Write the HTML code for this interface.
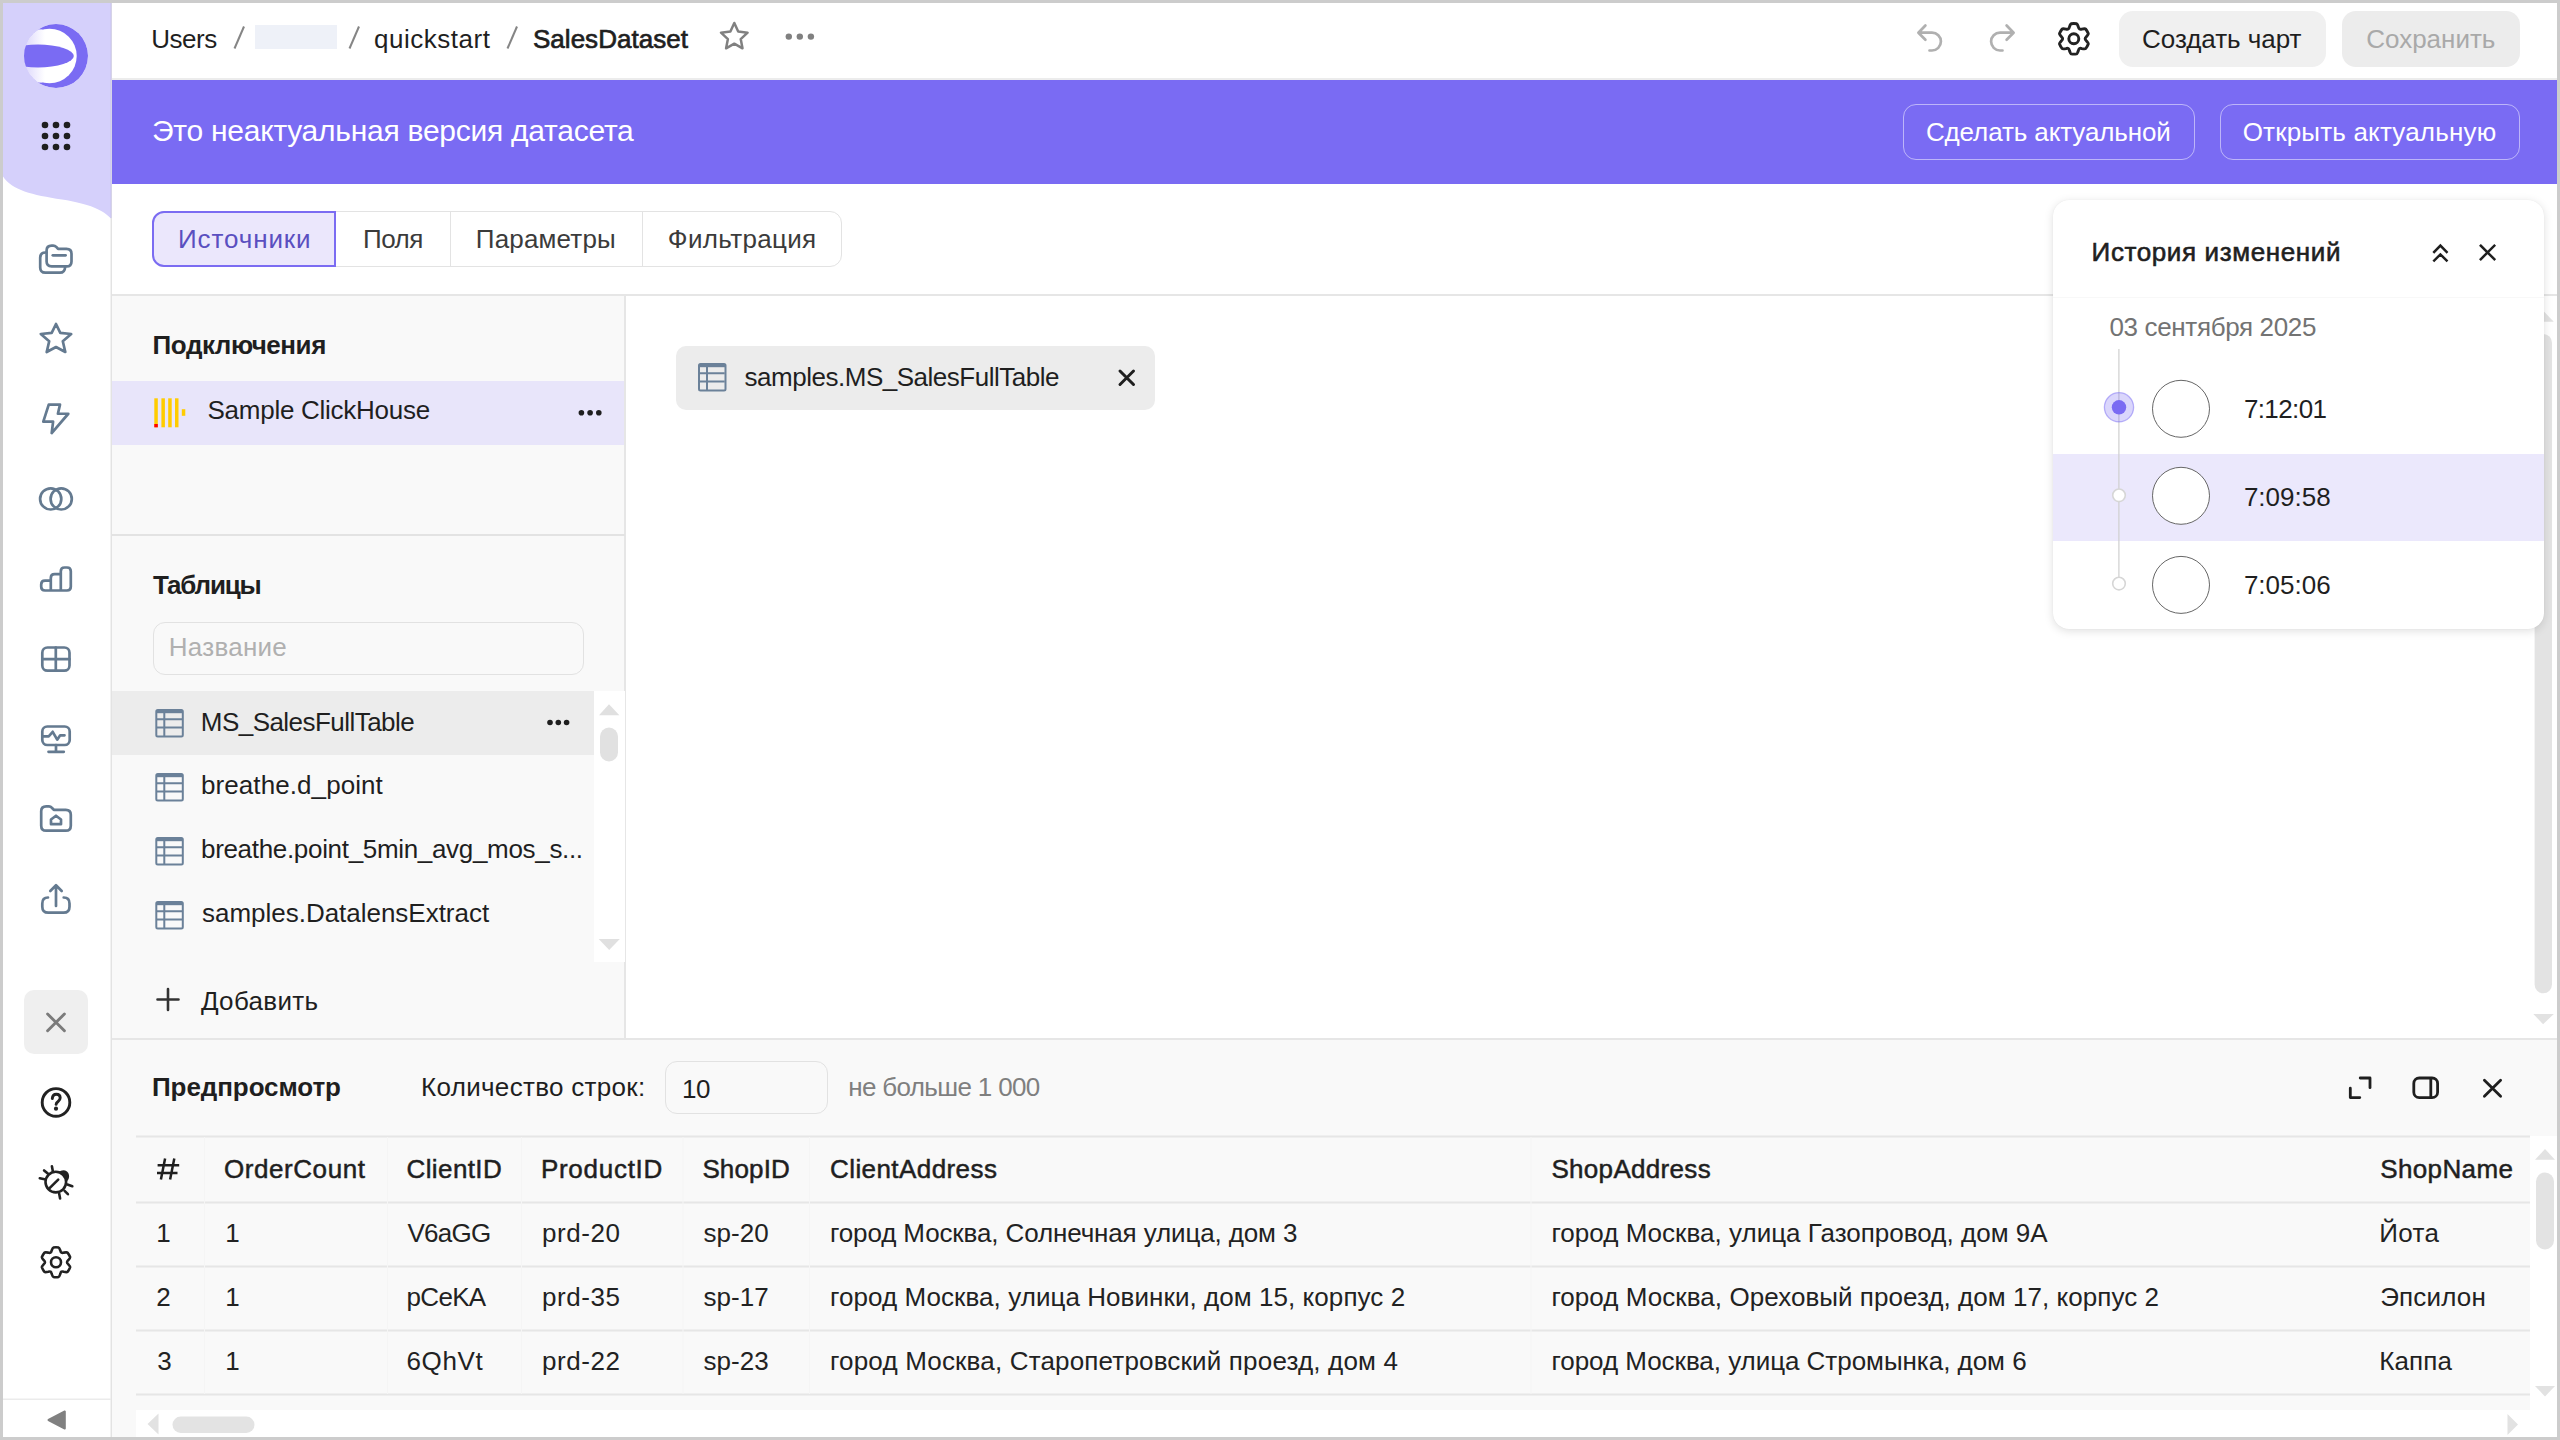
<!DOCTYPE html>
<html><head><meta charset="utf-8">
<style>
*{box-sizing:border-box;margin:0;padding:0}
html,body{width:2560px;height:1440px;overflow:hidden;background:#cccccc;font-family:"Liberation Sans",sans-serif;color:#1f1f1f}
.a{position:absolute}
#app{position:absolute;left:3px;top:3px;width:2554px;height:1434px;background:#fff;overflow:hidden}
#pg{position:absolute;left:-3px;top:-3px;width:2560px;height:1440px}
.t{position:absolute;white-space:nowrap;line-height:1;font-family:"Liberation Sans",sans-serif}
svg{position:absolute;left:0;top:0;overflow:visible}
.ic{fill:none;stroke:#647a90;stroke-width:2.7;stroke-linecap:round;stroke-linejoin:round}
.dk{fill:none;stroke:#222;stroke-width:2.6;stroke-linecap:round;stroke-linejoin:round}
</style></head><body>
<div id="app"><div id="pg">

<!-- ============ SIDEBAR ============ -->
<div class="a" style="left:0;top:0;width:112px;height:1440px;background:#fff;border-right:1px solid #e3e3e3"></div><div class="a" style="left:110px;top:0;width:1px;height:1440px;background:#f2f2f2"></div>
<svg width="2560" height="1440">
  <path d="M0 0 H111 V218.5 C103 210 90 204 62 199.5 C32 195 12 190 3 176.5 L0 176 Z" fill="#d5d0fb"/>
  <rect x="110.5" y="0" width="1" height="218" fill="#c9c4ec"/>
  <!-- logo -->
  <defs>
    <clipPath id="lc"><circle cx="56" cy="56" r="32"/></clipPath>
    <linearGradient id="lg" gradientUnits="userSpaceOnUse" x1="24" y1="0" x2="62" y2="0">
      <stop offset="0" stop-color="#dcd7fb"/><stop offset="0.55" stop-color="#ffffff"/>
    </linearGradient>
  </defs>
  <g clip-path="url(#lc)">
    <circle cx="56" cy="56" r="32" fill="#7a6bf3"/>
    <circle cx="49.5" cy="56" r="27.2" fill="url(#lg)"/><rect x="22" y="29.4" width="20.5" height="53.2" fill="url(#lg)"/>
    <ellipse cx="38" cy="56" rx="35.8" ry="11.4" fill="#7a6bf3"/>
  </g>
  <!-- grid dots -->
  <g fill="#1f1f1f">
    <circle cx="45" cy="125" r="3.3"/><circle cx="56" cy="125" r="3.3"/><circle cx="67" cy="125" r="3.3"/>
    <circle cx="45" cy="136" r="3.3"/><circle cx="56" cy="136" r="3.3"/><circle cx="67" cy="136" r="3.3"/>
    <circle cx="45" cy="147" r="3.3"/><circle cx="56" cy="147" r="3.3"/><circle cx="67" cy="147" r="3.3"/>
  </g>
  <!-- collections -->
  <g class="ic">
    <path d="M46.6 252.5 H45.4 Q40.2 252.5 40.2 257.7 V267.5 Q40.2 272.7 45.4 272.7 H60 Q64.8 272.7 65.2 266.6"/>
    <path d="M46.6 261.6 V250.6 Q46.6 245.6 51.6 245.6 H53.2 Q55 245.6 56.2 246.9 L58 248.8 H66.5 Q71.5 248.8 71.5 253.8 V261.4 Q71.5 266.4 66.5 266.4 H51.6 Q46.6 266.4 46.6 261.6 Z"/>
    <path d="M52.8 255.3 H65.6"/>
  </g>
  <!-- star -->
  <path class="ic" d="M56 324 L60.3 332.8 L71.2 334 L62.8 341.2 L65.3 352 L56 347 L46.7 352 L49.2 341.2 L40.8 334 L51.7 332.8Z"/>
  <!-- lightning -->
  <path class="ic" d="M48.75 404.6 H60 L57.9 413.75 H68.3 L51.7 433.1 L53.1 421.7 H43.3 Z"/>
  <!-- two circles -->
  <g class="ic"><circle cx="50.7" cy="498.9" r="10.6"/><circle cx="61.2" cy="498.9" r="10.6"/></g>
  <!-- bar chart -->
  <g class="ic">
    <path d="M41.2 584.5 Q41.2 580.7 45 580.7 H50.8 V578 Q50.8 574.2 54.6 574.2 H60.8 V571.3 Q60.8 567.5 64.6 567.5 H67 Q70.8 567.5 70.8 571.3 V586.7 Q70.8 590.5 67 590.5 H45 Q41.2 590.5 41.2 586.7 Z M50.8 580.7 V590.5 M60.8 574.2 V590.5"/>
  </g>
  <!-- table -->
  <g class="ic">
    <rect x="42.3" y="647.5" width="27.2" height="23.2" rx="5.2"/>
    <path d="M55.8 647.5 V670.7 M42.3 659.2 H69.5"/>
  </g>
  <!-- monitor -->
  <g class="ic">
    <rect x="42.3" y="726.5" width="27.4" height="18.5" rx="5"/>
    <path d="M42.8 736.3 H48.7 L52.7 731.8 L57.2 739.7 L60.2 735.3 H64.5"/>
    <path d="M56 745 V751.8 M48.5 751.8 H63.8"/>
  </g>
  <!-- folder home -->
  <g class="ic">
    <path d="M41.2 825.7 V811.3 Q41.2 806.3 46.2 806.3 H49 Q50.6 806.3 51.8 807.7 L53.8 809.8 H65.8 Q70.8 809.8 70.8 814.8 V825.7 Q70.8 830.7 65.8 830.7 H46.2 Q41.2 830.7 41.2 825.7 Z"/>
    <path d="M51 824.2 V819.5 L56 815.7 L61 819.5 V824.2 Z"/>
  </g>
  <!-- upload -->
  <g class="ic">
    <path d="M56 885.5 V906 M50.3 891 L56 885.3 L61.7 891"/>
    <path d="M48 897.5 Q42.3 897.5 42.3 903.5 V906.7 Q42.3 912.7 48.3 912.7 H63.5 Q69.5 912.7 69.5 906.7 V903.5 Q69.5 897.5 63.7 897.5"/>
  </g>
  <!-- bottom -->
  <rect x="24" y="990" width="64" height="64" rx="10" fill="#efefef"/>
  <path d="M47.6 1014 L64.4 1030.8 M64.4 1014 L47.6 1030.8" stroke="#7b7b7b" stroke-width="2.9" stroke-linecap="round"/>
  <g class="dk" style="stroke-width:2.9">
    <circle cx="56" cy="1102.4" r="13.8"/>
    <path d="M52.3 1098.6 Q52.6 1094.2 56.3 1094.2 Q60.1 1094.2 60.2 1097.8 Q60.2 1100 58.1 1101.5 Q56.1 1102.9 56.1 1104.4"/>
  </g>
  <circle cx="56" cy="1108.7" r="2.1" fill="#222"/>
  <!-- bug -->
  <g class="dk">
    <circle cx="55.8" cy="1182.1" r="10.3"/>
    <path d="M49.6 1188.2 L58.2 1179.6"/>
    <path d="M51.9 1166.2 L52.8 1170.9 M44.1 1170.4 L47.8 1173.6 M39.8 1178.2 L44.6 1179.2 M67.4 1184.5 L72.3 1186.2 M64.6 1190.8 L67.9 1194.2 M59.2 1193.8 L60.1 1198.5"/>
  </g>
  <path d="M58.5 1172.2 Q63 1168.5 67 1171.5 Q70.2 1174.5 68.6 1179 L66.6 1182 Q64.5 1175 58.5 1172.2 Z" fill="#222"/>
  <!-- gear -->
  <path class="dk" d="M51.59 1250.72 Q52.63 1247.58 53.40 1247.43 A15.0 15.0 0 0 1 58.60 1247.43 Q59.37 1247.58 60.41 1250.72 Q60.95 1253.63 63.74 1252.64 Q66.97 1251.97 67.49 1252.56 A15.0 15.0 0 0 1 70.10 1257.07 Q70.34 1257.81 68.15 1260.28 Q65.90 1262.20 68.15 1264.12 Q70.34 1266.59 70.10 1267.33 A15.0 15.0 0 0 1 67.49 1271.84 Q66.97 1272.43 63.74 1271.76 Q60.95 1270.77 60.41 1273.68 Q59.37 1276.82 58.60 1276.97 A15.0 15.0 0 0 1 53.40 1276.97 Q52.63 1276.82 51.59 1273.68 Q51.05 1270.77 48.26 1271.76 Q45.03 1272.43 44.51 1271.84 A15.0 15.0 0 0 1 41.90 1267.33 Q41.66 1266.59 43.85 1264.12 Q46.10 1262.20 43.85 1260.28 Q41.66 1257.81 41.90 1257.07 A15.0 15.0 0 0 1 44.51 1252.56 Q45.03 1251.97 48.26 1252.64 Q51.05 1253.63 51.59 1250.72 Z"/><circle class="dk" cx="56" cy="1262.2" r="5"/>
  <rect x="3" y="1398.5" width="108" height="1.5" fill="#ebebeb"/>
  <path d="M64.8 1411.5 V1428.5 L48.5 1420 Z" fill="#808080" stroke="#808080" stroke-width="2" stroke-linejoin="round"/>
</svg>

<!-- ============ HEADER ============ -->
<div class="a" style="left:112px;top:78px;width:2448px;height:2px;background:#ececec"></div>
<div class="a" style="left:255px;top:25px;width:82px;height:24px;background:#eef1f8"></div>
<svg width="2560" height="1440">
  <g stroke="#858585" stroke-width="2" stroke-linecap="butt">
    <path d="M244 26.5 L234.5 48.5"/><path d="M359 26.5 L349.5 48.5"/><path d="M517 26.5 L507.5 48.5"/>
  </g>
  <path d="M734.3 23.0 L738.2 31.6 L747.6 32.7 L740.7 39.1 L742.5 48.3 L734.3 43.7 L726.1 48.3 L727.9 39.1 L721.0 32.7 L730.4 31.6Z" fill="none" stroke="#808080" stroke-width="2.5" stroke-linejoin="round"/>
  <g fill="#808080"><circle cx="788.8" cy="36.6" r="3.2"/><circle cx="799.8" cy="36.6" r="3.2"/><circle cx="810.9" cy="36.6" r="3.2"/></g>
  <!-- undo / redo -->
  <g fill="none" stroke="#b0b0b0" stroke-width="2.7" stroke-linecap="round" stroke-linejoin="round">
    <path d="M1925.4 25.5 L1918.4 32.7 L1925.4 39.7 M1918.6 32.7 H1932 A8.9 8.9 0 0 1 1932 50.5 H1929.5"/>
    <path d="M2006.6 25.5 L2013.6 32.7 L2006.6 39.7 M2013.4 32.7 H2000 A8.9 8.9 0 0 0 2000 50.5 H2002.5"/>
  </g>
  <path d="M2069.40 27.09 Q2070.46 23.89 2071.24 23.73 A15.3 15.3 0 0 1 2076.56 23.73 Q2077.34 23.89 2078.40 27.09 Q2078.95 30.05 2081.80 29.05 Q2085.09 28.37 2085.62 28.97 A15.3 15.3 0 0 1 2088.28 33.57 Q2088.53 34.33 2086.29 36.84 Q2084.00 38.80 2086.29 40.76 Q2088.53 43.27 2088.28 44.03 A15.3 15.3 0 0 1 2085.62 48.63 Q2085.09 49.23 2081.80 48.55 Q2078.95 47.55 2078.40 50.51 Q2077.34 53.71 2076.56 53.87 A15.3 15.3 0 0 1 2071.24 53.87 Q2070.46 53.71 2069.40 50.51 Q2068.85 47.55 2066.00 48.55 Q2062.71 49.23 2062.18 48.63 A15.3 15.3 0 0 1 2059.52 44.03 Q2059.27 43.27 2061.51 40.76 Q2063.80 38.80 2061.51 36.84 Q2059.27 34.33 2059.52 33.57 A15.3 15.3 0 0 1 2062.18 28.97 Q2062.71 28.37 2066.00 29.05 Q2068.85 30.05 2069.40 27.09 Z" fill="none" stroke="#222" stroke-width="2.9" stroke-linejoin="round"/>
  <circle cx="2073.8" cy="38.8" r="5" fill="none" stroke="#222" stroke-width="2.9"/>
</svg>
<div class="a" style="left:2118.5px;top:11px;width:207.5px;height:56px;border-radius:14px;background:#f0f0f0"></div>
<div class="a" style="left:2342px;top:11px;width:178px;height:56px;border-radius:14px;background:#ececec"></div>

<!-- ============ BANNER ============ -->
<div class="a" style="left:112px;top:80px;width:2448px;height:104px;background:#7a6bf3"></div>
<div class="a" style="left:1902.5px;top:104px;width:292px;height:56px;border-radius:13px;border:1.5px solid rgba(255,255,255,0.5)"></div>
<div class="a" style="left:2219.5px;top:104px;width:300px;height:56px;border-radius:13px;border:1.5px solid rgba(255,255,255,0.5)"></div>

<!-- ============ TABS ============ -->
<div class="a" style="left:152px;top:211px;width:690px;height:56px;border-radius:12px;border:1.5px solid #e3e3e3"></div>
<div class="a" style="left:449.7px;top:212px;width:1.5px;height:54px;background:#e3e3e3"></div>
<div class="a" style="left:641.7px;top:212px;width:1.5px;height:54px;background:#e3e3e3"></div>
<div class="a" style="left:152px;top:211px;width:184px;height:56px;border-radius:12px 0 0 12px;border:2px solid #7b6cf2;background:#ebe7fc"></div>

<!-- horizontal separator -->
<div class="a" style="left:112px;top:294px;width:2448px;height:2px;background:#e6e6e6"></div>

<!-- ============ LEFT PANEL ============ -->
<div class="a" style="left:112px;top:296px;width:513px;height:743px;background:#f9f9f9"></div>
<div class="a" style="left:624px;top:296px;width:2px;height:743px;background:#e6e6e6"></div>
<div class="a" style="left:112px;top:381px;width:512px;height:64px;background:#e8e5fa"></div>
<svg width="2560" height="1440">
  <g fill="#ffcc00">
    <rect x="154.3" y="398.3" width="3.5" height="29"/><rect x="161.4" y="398.3" width="3.5" height="29"/>
    <rect x="168.2" y="398.3" width="3.5" height="29"/><rect x="175.0" y="398.3" width="3.5" height="29"/>
    <rect x="181.8" y="409.2" width="3.5" height="6.6"/>
  </g>
  <rect x="154.3" y="424" width="3.5" height="3.3" fill="#ff0000"/>
  <g fill="#1f1f1f"><circle cx="581.4" cy="412.7" r="2.8"/><circle cx="590.1" cy="412.7" r="2.8"/><circle cx="598.8" cy="412.7" r="2.8"/></g>
</svg>
<div class="a" style="left:112px;top:534px;width:513px;height:2px;background:#e3e3e3"></div>
<div class="a" style="left:152.5px;top:621.5px;width:431px;height:53px;border-radius:12px;border:1.5px solid #e2e2e2"></div>
<div class="a" style="left:112px;top:691px;width:481.5px;height:63.5px;background:#ececec"></div>
<div class="a" style="left:593.5px;top:691px;width:31px;height:271px;background:#ffffff"></div>
<svg width="2560" height="1440">
  <path d="M599 715.3 L609 704.3 L619.4 715.3 Z" fill="#e0e0e0"/>
  <path d="M598.7 939 L609.2 950 L619.8 939 Z" fill="#e0e0e0"/>
  <rect x="600" y="727.5" width="18" height="34" rx="9" fill="#e1e1e1"/>
  <g fill="#1f1f1f"><circle cx="550" cy="722.5" r="2.8"/><circle cx="558.3" cy="722.5" r="2.8"/><circle cx="566.6" cy="722.5" r="2.8"/></g>
  <g id="tbl" fill="none" stroke="#6b8199" stroke-width="2">
    <rect x="156.3" y="710" width="26.5" height="26.5" rx="1.5"/>
    <path d="M156.3 711.6 H182.8" stroke-width="3.2"/>
    <path d="M157 719.3 H182 M157 727.6 H182 M164.3 711 V736"/>
  </g>
  <use href="#tbl" x="0" y="64"/><use href="#tbl" x="0" y="128"/><use href="#tbl" x="0" y="192"/>
  <path d="M168 989 V1010 M157.5 999.5 H178.5" stroke="#333" stroke-width="2.6" stroke-linecap="round"/>
</svg>

<!-- ============ SOURCE CANVAS ============ -->
<div class="a" style="left:676px;top:346px;width:479px;height:63.5px;border-radius:10px;background:#ececec"></div>
<svg width="2560" height="1440">
  <use href="#tbl" x="542.7" y="-346"/>
  <path d="M1120 371 L1133.5 384.5 M1133.5 371 L1120 384.5" stroke="#1f1f1f" stroke-width="3" stroke-linecap="round"/>
  <path d="M2533.2 321.8 L2543.2 310.8 L2553.8 321.8 Z" fill="#e2e2e2"/>
  <path d="M2533.3 1014 L2543.1 1024.2 L2553.8 1014 Z" fill="#e2e2e2"/>
  <rect x="2534.6" y="334" width="17.4" height="659.3" rx="8.7" fill="#e3e3e3"/>
</svg>

<!-- ============ HISTORY PANEL ============ -->
<div class="a" style="left:2053px;top:200px;width:491px;height:428.5px;border-radius:16px;background:#fff;box-shadow:0 2px 10px rgba(0,0,0,0.13),0 0 1px rgba(0,0,0,0.08);overflow:hidden">
  <div class="a" style="left:0;top:253.5px;width:491px;height:87px;background:#ebe8fc"></div>
  <div class="a" style="left:0;top:97px;width:491px;height:1px;background:#f8f8f8"></div>
</div>
<svg width="2560" height="1440">
  <path d="M2434.2 251.9 L2440.4 245.6 L2446.6 251.9 M2434.2 260.6 L2440.4 254.4 L2446.6 260.6" fill="none" stroke="#1f1f1f" stroke-width="2.5" stroke-linecap="square" stroke-linejoin="miter"/>
  <path d="M2480.8 245.7 L2494.3 259.2 M2494.3 245.7 L2480.8 259.2" stroke="#1f1f1f" stroke-width="2.5" stroke-linecap="square"/>
  <rect x="2118.3" y="349" width="1.2" height="234" fill="#cfcfcf"/>
  <circle cx="2119" cy="407.3" r="14.6" fill="rgba(122,107,243,0.28)" stroke="rgba(122,107,243,0.5)" stroke-width="1.3"/>
  <circle cx="2119" cy="407.3" r="7.2" fill="#7a6bf3"/>
  <circle cx="2119" cy="495.3" r="6.3" fill="#fff" stroke="#d6d6d6" stroke-width="1.6"/>
  <circle cx="2119" cy="583.6" r="6.3" fill="#fff" stroke="#d6d6d6" stroke-width="1.6"/>
  <g fill="#fff" stroke="#666" stroke-width="1">
    <circle cx="2181" cy="408.8" r="28.5"/><circle cx="2181" cy="495.8" r="28.5"/><circle cx="2181" cy="584.9" r="28.5"/>
  </g>
</svg>

<!-- ============ PREVIEW ============ -->
<div class="a" style="left:112px;top:1038px;width:2448px;height:2px;background:#e6e6e6"></div>
<div class="a" style="left:112px;top:1040px;width:2448px;height:400px;background:#f9f9f9"></div>
<div class="a" style="left:664.5px;top:1061px;width:163px;height:53px;border-radius:12px;border:1.5px solid #e2e2e2"></div>
<svg width="2560" height="1440">
  <g fill="none" stroke="#1f1f1f" stroke-width="2.8" stroke-linecap="round" stroke-linejoin="round">
    <path d="M2350.3 1088.2 V1097.6 H2359.8 M2370 1087.7 V1078 H2360.2"/>
    <rect x="2413.8" y="1078" width="23.8" height="19.7" rx="5.5"/>
    <path d="M2430.8 1078.5 V1097.2"/>
  </g>
  <path d="M2484.4 1080.2 L2500.6 1096.2 M2500.6 1080.2 L2484.4 1096.2" stroke="#1f1f1f" stroke-width="2.8" stroke-linecap="round"/>
  <!-- table lines -->
  <g fill="#e6e6e6">
    <rect x="136" y="1135.5" width="2394" height="2"/>
    <rect x="136" y="1201.5" width="2394" height="2"/>
    <rect x="136" y="1265.5" width="2394" height="2"/>
    <rect x="136" y="1329.5" width="2394" height="2"/>
    <rect x="136" y="1393.5" width="2394" height="2"/>
  </g>
  <path d="M165.1 1158.5 L160.9 1179.5 M174.3 1158.5 L170.1 1179.5 M157.6 1165.3 H179.2 M157 1172.9 H177.5" stroke="#1f1f1f" stroke-width="2.5"/>
  <g fill="#f5f5f5">
    <rect x="204" y="1137" width="1" height="257"/><rect x="387" y="1137" width="1" height="257"/>
    <rect x="521" y="1137" width="1" height="257"/><rect x="682.5" y="1137" width="1" height="257"/>
    <rect x="809" y="1137" width="1" height="257"/><rect x="1530.5" y="1137" width="1" height="257"/>
    
  </g>
  <rect x="2530" y="1136" width="27" height="301" fill="#fff"/>
  <rect x="136" y="1410" width="2421" height="27" fill="#fff"/>
  <path d="M2535 1159.8 L2545 1149 L2555 1159.8 Z" fill="#e2e2e2"/>
  <path d="M2535 1386 L2545 1396.5 L2555 1386 Z" fill="#e2e2e2"/>
  <rect x="2536" y="1172.5" width="18" height="77" rx="9" fill="#e3e3e3"/>
  <path d="M158.5 1413.5 L147.5 1424 L158.5 1434.5 Z" fill="#e2e2e2"/>
  <path d="M2507.5 1414 L2518 1424.5 L2507.5 1435 Z" fill="#e2e2e2"/>
  <rect x="172.5" y="1416.5" width="82" height="16.5" rx="8.25" fill="#e3e3e3"/>
</svg>


<div class="t" style="left:151.2px;top:25.8px;font-size:26px;color:#1f1f1f;letter-spacing:-0.47px;">Users</div>
<div class="t" style="left:374.0px;top:25.8px;font-size:26px;color:#1f1f1f;letter-spacing:0.51px;">quickstart</div>
<div class="t" style="left:533.0px;top:25.8px;font-size:26px;color:#1f1f1f;letter-spacing:0.02px;-webkit-text-stroke:0.7px #1f1f1f;">SalesDataset</div>
<div class="t" style="left:2142.0px;top:26.2px;font-size:26px;color:#1f1f1f;letter-spacing:-0.03px;">Создать чарт</div>
<div class="t" style="left:2366.2px;top:26.2px;font-size:26px;color:#a9a9a9;">Сохранить</div>
<div class="t" style="left:152.0px;top:116.2px;font-size:30px;color:#ffffff;letter-spacing:-0.25px;">Это неактуальная версия датасета</div>
<div class="t" style="left:1925.9px;top:119.0px;font-size:26px;color:#ffffff;letter-spacing:-0.11px;">Сделать актуальной</div>
<div class="t" style="left:2242.7px;top:119.0px;font-size:26px;color:#ffffff;letter-spacing:0.18px;">Открыть актуальную</div>
<div class="t" style="left:178.0px;top:225.8px;font-size:26px;color:#5a4fc0;letter-spacing:0.89px;">Источники</div>
<div class="t" style="left:363.0px;top:225.8px;font-size:26px;color:#3b3b3b;letter-spacing:-0.52px;">Поля</div>
<div class="t" style="left:475.8px;top:225.8px;font-size:26px;color:#3b3b3b;letter-spacing:0.17px;">Параметры</div>
<div class="t" style="left:667.8px;top:225.8px;font-size:26px;color:#3b3b3b;letter-spacing:0.34px;">Фильтрация</div>
<div class="t" style="left:152.6px;top:332.1px;font-size:26px;color:#1f1f1f;font-weight:700;letter-spacing:-0.45px;">Подключения</div>
<div class="t" style="left:207.5px;top:397.0px;font-size:26px;color:#1f1f1f;letter-spacing:-0.26px;">Sample ClickHouse</div>
<div class="t" style="left:153.0px;top:572.0px;font-size:26px;color:#1f1f1f;font-weight:700;letter-spacing:-1.18px;">Таблицы</div>
<div class="t" style="left:168.8px;top:633.9px;font-size:26px;color:#b0b0b0;letter-spacing:0.25px;">Название</div>
<div class="t" style="left:200.8px;top:708.8px;font-size:26px;color:#1f1f1f;letter-spacing:-0.54px;">MS_SalesFullTable</div>
<div class="t" style="left:201.0px;top:772.4px;font-size:26px;color:#1f1f1f;letter-spacing:0.08px;">breathe.d_point</div>
<div class="t" style="left:201.0px;top:836.4px;font-size:26px;color:#1f1f1f;letter-spacing:-0.32px;">breathe.point_5min_avg_mos_s...</div>
<div class="t" style="left:202.0px;top:900.4px;font-size:26px;color:#1f1f1f;letter-spacing:-0.02px;">samples.DatalensExtract</div>
<div class="t" style="left:200.9px;top:988.0px;font-size:26px;color:#1f1f1f;letter-spacing:0.33px;">Добавить</div>
<div class="t" style="left:744.6px;top:363.6px;font-size:26px;color:#1f1f1f;letter-spacing:-0.49px;">samples.MS_SalesFullTable</div>
<div class="t" style="left:2091.6px;top:238.7px;font-size:26px;color:#1f1f1f;letter-spacing:0.61px;-webkit-text-stroke:0.6px #1f1f1f;">История изменений</div>
<div class="t" style="left:2109.5px;top:314.0px;font-size:26px;color:#737373;letter-spacing:-0.35px;">03 сентября 2025</div>
<div class="t" style="left:2243.9px;top:395.8px;font-size:26px;color:#1f1f1f;letter-spacing:-0.61px;">7:12:01</div>
<div class="t" style="left:2243.9px;top:483.8px;font-size:26px;color:#1f1f1f;">7:09:58</div>
<div class="t" style="left:2243.9px;top:571.6px;font-size:26px;color:#1f1f1f;">7:05:06</div>
<div class="t" style="left:152.0px;top:1073.8px;font-size:26px;color:#1f1f1f;font-weight:700;letter-spacing:-0.08px;">Предпросмотр</div>
<div class="t" style="left:421.1px;top:1074.0px;font-size:26px;color:#1f1f1f;letter-spacing:0.30px;">Количество строк:</div>
<div class="t" style="left:682.0px;top:1075.5px;font-size:26px;color:#1f1f1f;letter-spacing:-0.46px;">10</div>
<div class="t" style="left:848.3px;top:1074.0px;font-size:26px;color:#7f7f7f;letter-spacing:-0.66px;">не больше 1 000</div>
<div class="t" style="left:223.9px;top:1155.8px;font-size:26px;color:#1f1f1f;letter-spacing:0.58px;font-weight:400;-webkit-text-stroke:0.5px #1f1f1f;">OrderCount</div>
<div class="t" style="left:406.5px;top:1155.8px;font-size:26px;color:#1f1f1f;letter-spacing:0.40px;font-weight:400;-webkit-text-stroke:0.5px #1f1f1f;">ClientID</div>
<div class="t" style="left:540.9px;top:1155.8px;font-size:26px;color:#1f1f1f;letter-spacing:0.73px;font-weight:400;-webkit-text-stroke:0.5px #1f1f1f;">ProductID</div>
<div class="t" style="left:702.4px;top:1155.8px;font-size:26px;color:#1f1f1f;letter-spacing:0.13px;font-weight:400;-webkit-text-stroke:0.5px #1f1f1f;">ShopID</div>
<div class="t" style="left:830.0px;top:1155.8px;font-size:26px;color:#1f1f1f;letter-spacing:0.42px;font-weight:400;-webkit-text-stroke:0.5px #1f1f1f;">ClientAddress</div>
<div class="t" style="left:1551.4px;top:1155.8px;font-size:26px;color:#1f1f1f;letter-spacing:0.32px;font-weight:400;-webkit-text-stroke:0.5px #1f1f1f;">ShopAddress</div>
<div class="t" style="left:2380.2px;top:1155.8px;font-size:26px;color:#1f1f1f;letter-spacing:0.38px;font-weight:400;-webkit-text-stroke:0.5px #1f1f1f;">ShopName</div>
<div class="t" style="left:156.3px;top:1220.0px;font-size:26px;color:#222;">1</div>
<div class="t" style="left:225.2px;top:1220.0px;font-size:26px;color:#222;">1</div>
<div class="t" style="left:407.5px;top:1220.0px;font-size:26px;color:#222;letter-spacing:-0.72px;">V6aGG</div>
<div class="t" style="left:541.9px;top:1220.0px;font-size:26px;color:#222;letter-spacing:0.58px;">prd-20</div>
<div class="t" style="left:703.4px;top:1220.0px;font-size:26px;color:#222;letter-spacing:0.06px;">sp-20</div>
<div class="t" style="left:830.0px;top:1220.0px;font-size:26px;color:#222;letter-spacing:-0.13px;">город Москва, Солнечная улица, дом 3</div>
<div class="t" style="left:1551.4px;top:1220.0px;font-size:26px;color:#222;letter-spacing:0.02px;">город Москва, улица Газопровод, дом 9А</div>
<div class="t" style="left:2379.2px;top:1220.0px;font-size:26px;color:#222;letter-spacing:0.34px;">Йота</div>
<div class="t" style="left:156.3px;top:1284.0px;font-size:26px;color:#222;">2</div>
<div class="t" style="left:225.2px;top:1284.0px;font-size:26px;color:#222;">1</div>
<div class="t" style="left:406.5px;top:1284.0px;font-size:26px;color:#222;letter-spacing:-0.68px;">pCeKA</div>
<div class="t" style="left:541.9px;top:1284.0px;font-size:26px;color:#222;letter-spacing:0.58px;">prd-35</div>
<div class="t" style="left:703.4px;top:1284.0px;font-size:26px;color:#222;letter-spacing:0.06px;">sp-17</div>
<div class="t" style="left:830.0px;top:1284.0px;font-size:26px;color:#222;letter-spacing:0.06px;">город Москва, улица Новинки, дом 15, корпус 2</div>
<div class="t" style="left:1551.4px;top:1284.0px;font-size:26px;color:#222;letter-spacing:0.05px;">город Москва, Ореховый проезд, дом 17, корпус 2</div>
<div class="t" style="left:2380.2px;top:1284.0px;font-size:26px;color:#222;letter-spacing:0.18px;">Эпсилон</div>
<div class="t" style="left:157.3px;top:1348.0px;font-size:26px;color:#222;">3</div>
<div class="t" style="left:225.2px;top:1348.0px;font-size:26px;color:#222;">1</div>
<div class="t" style="left:406.5px;top:1348.0px;font-size:26px;color:#222;letter-spacing:0.63px;">6QhVt</div>
<div class="t" style="left:541.9px;top:1348.0px;font-size:26px;color:#222;letter-spacing:0.58px;">prd-22</div>
<div class="t" style="left:703.4px;top:1348.0px;font-size:26px;color:#222;letter-spacing:0.06px;">sp-23</div>
<div class="t" style="left:830.0px;top:1348.0px;font-size:26px;color:#222;letter-spacing:0.17px;">город Москва, Старопетровский проезд, дом 4</div>
<div class="t" style="left:1551.4px;top:1348.0px;font-size:26px;color:#222;letter-spacing:-0.04px;">город Москва, улица Стромынка, дом 6</div>
<div class="t" style="left:2379.2px;top:1348.0px;font-size:26px;color:#222;letter-spacing:0.11px;">Каппа</div>

</div></div>
</body></html>
